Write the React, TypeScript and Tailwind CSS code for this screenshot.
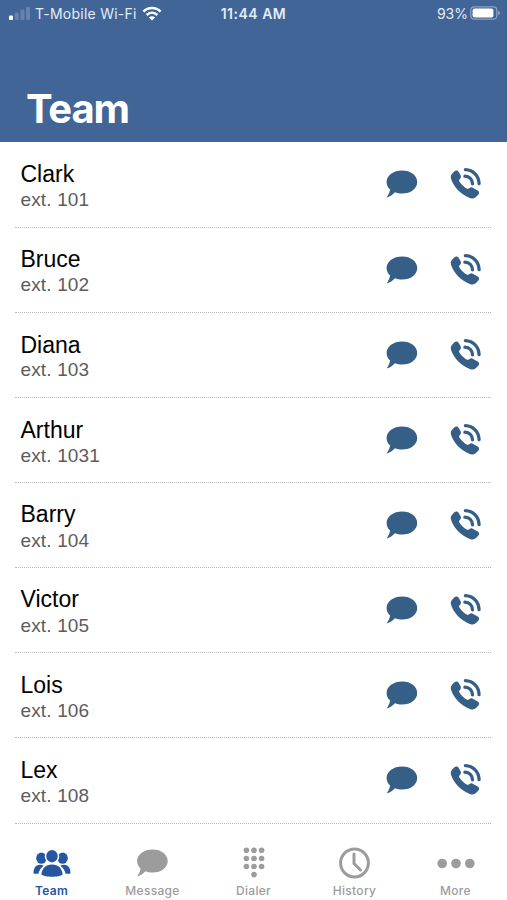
const TEAM = [
  { name: "Clark", ext: "101", nudge: "" },
  { name: "Bruce", ext: "102", nudge: "" },
  { name: "Diana", ext: "103", nudge: "translate-y-px" },
  { name: "Arthur", ext: "1031", nudge: "" },
  { name: "Barry", ext: "104", nudge: "-translate-y-px" },
  { name: "Victor", ext: "105", nudge: "-translate-y-px" },
  { name: "Lois", ext: "106", nudge: "" },
  { name: "Lex", ext: "108", nudge: "" },
];

const TABS = [
  { label: "Team", Icon: TeamIcon },
  { label: "Message", Icon: MessageIcon },
  { label: "Dialer", Icon: DialerIcon },
  { label: "History", Icon: HistoryIcon },
  { label: "More", Icon: MoreIcon },
];

function BubbleIcon({ className }: { className: string }) {
  return (
    <svg viewBox="0 0 32 28" fill="currentColor" className={className}>
      <path d="M16.2 0.5C24.8 0.5 31.2 5.4 31.2 12C31.2 18.6 24.8 23.6 16.2 23.6C13.5 23.6 11 23.1 8.9 22.2C7 24.3 4.5 26.2 0.8 27.4C2.5 24.8 3.7 22.3 4.1 19.6C1.7 17.5 0.6 14.9 0.6 12C0.6 5.4 7.4 0.5 16.2 0.5Z" />
    </svg>
  );
}

function CallIcon() {
  return (
    <svg viewBox="0 0 32 32" className="h-8 w-8 shrink-0">
      <path
        fill="currentColor"
        d="M1.9 6.9L4.4 4.3C5.8 2.9 7.6 3.2 8.6 4.7L10.5 8C11.3 9.5 11.1 10.9 9.9 12L8.8 13.2C10.2 16.4 14.1 20.3 17.7 22L19.6 20.9C20.8 20.1 22 20.2 23.2 20.9L27.7 23.5C29.3 24.5 29.6 26.1 28.4 27.5L26 30.1C24.4 31.8 22 31.7 19.8 30.9C11.2 27.7 4.1 20.2 1.3 12.4C0.5 10.2 0.5 8.4 1.9 6.9Z"
      />
      <path
        fill="none"
        stroke="currentColor"
        strokeWidth="3.3"
        strokeLinecap="round"
        d="M15.4 2.6C23.4 3 28.8 8.7 29.1 16.6M14.9 9.2C19.4 9.4 22.3 12.4 22.5 16.8"
      />
    </svg>
  );
}

function TeamIcon() {
  return (
    <svg viewBox="0 0 38 28" fill="currentColor" className="h-7 w-[38px]">
      <ellipse cx="8.4" cy="9.2" rx="5.2" ry="5.6" />
      <ellipse cx="29.6" cy="9.2" rx="5.2" ry="5.6" />
      <path d="M0.6 24.8C0.2 19.4 2.6 15.9 6.8 15.7C8.4 15.6 9.7 16 10.6 16.8C8 18.9 6 21.6 5.4 24.8Z" />
      <path d="M37.4 24.8C37.8 19.4 35.4 15.9 31.2 15.7C29.6 15.6 28.3 16 27.4 16.8C30 18.9 32 21.6 32.6 24.8Z" />
      <ellipse cx="19" cy="7.2" rx="7.2" ry="8" fill="white" />
      <ellipse cx="19" cy="7.2" rx="5.7" ry="6.2" />
      <path d="M8.4 25.4C8.8 19.4 12.8 15.4 19 15.4C25.2 15.4 29.2 19.4 29.6 25.4C26.5 28.4 11.5 28.4 8.4 25.4Z" />
    </svg>
  );
}

function MessageIcon() {
  return <BubbleIcon className="h-7 w-[33px]" />;
}

function DialerIcon() {
  return (
    <svg viewBox="0 0 24 32" fill="currentColor" className="h-8 w-6">
      {[3.2, 11.5, 19.5].map((y) =>
        [4.4, 12, 19.6].map((x) => <circle key={`${x}-${y}`} cx={x} cy={y} r="2.8" />),
      )}
      <circle cx="12" cy="27.6" r="2.8" />
    </svg>
  );
}

function HistoryIcon() {
  return (
    <svg viewBox="0 0 32 32" fill="none" stroke="currentColor" className="h-8 w-8">
      <circle cx="15.5" cy="16" r="13.9" strokeWidth="3" />
      <path d="M15 7V16.5L21.5 23" strokeWidth="3" strokeLinecap="round" strokeLinejoin="round" />
    </svg>
  );
}

function MoreIcon() {
  return (
    <svg viewBox="0 0 38 12" fill="currentColor" className="h-3 w-[38px]">
      <circle cx="5.2" cy="6.5" r="4.8" />
      <circle cx="19" cy="6.5" r="4.8" />
      <circle cx="32.8" cy="6.5" r="4.8" />
    </svg>
  );
}

function StatusBar() {
  return (
    <div className="grid h-7 grid-cols-[1fr_auto_1fr] items-center pl-2 pr-1.5 text-[14px] leading-7 text-[#e3ebf7]">
      <div className="flex items-center">
        <svg viewBox="0 0 24 14" fill="white" className="h-3.5 w-6">
          <rect x="1" y="8.5" width="4" height="4.5" rx="1" />
          <rect x="6.8" y="5.5" width="4" height="7.5" rx="1" opacity="0.2" />
          <rect x="12.4" y="2.5" width="4" height="10.5" rx="1" opacity="0.2" />
          <rect x="18" y="0" width="4" height="13" rx="1" opacity="0.2" />
        </svg>
        <span className="ml-[3px] whitespace-nowrap tracking-[0.25px]">T-Mobile Wi-Fi</span>
        <svg viewBox="0 0 20 15" fill="none" stroke="white" strokeWidth="2.6" className="ml-[5px] h-[15px] w-5 -translate-y-px">
          <path d="M1.4 5.6C6.2 0.8 13.8 0.8 18.6 5.6M4.7 9C7.8 6 12.2 6 15.3 9" />
          <path d="M10 14.6L6.9 11.5C8.7 9.7 11.3 9.7 13.1 11.5Z" fill="white" stroke="none" />
        </svg>
      </div>
      <span className="-translate-x-px font-semibold tracking-[0.5px]">11:44 AM</span>
      <div className="flex items-center justify-end">
        <span>93%</span>
        <svg viewBox="0 0 31 14" className="ml-[2px] h-3.5 w-[31px] -translate-y-px">
          <rect x="0.8" y="0.8" width="26" height="12.4" rx="3.5" fill="none" stroke="white" strokeOpacity="0.4" strokeWidth="1.2" />
          <rect x="2.6" y="2.6" width="20.8" height="8.8" rx="2" fill="white" />
          <path d="M28.3 4.8C30.3 5.5 30.3 8.5 28.3 9.2Z" fill="white" fillOpacity="0.5" />
        </svg>
      </div>
    </div>
  );
}

export default function App() {
  return (
    <div className="flex h-[900px] w-full flex-col overflow-hidden bg-white font-['Inter',sans-serif]">
      <header className="flex h-[142.4px] shrink-0 flex-col justify-between bg-[#416596]">
        <StatusBar />
        <h1 className="pb-2 pl-[26px] text-[40px] font-bold leading-[50px] tracking-[-1.2px] text-white">
          Team
        </h1>
      </header>

      <ul className="pl-[15px] pr-4">
        {TEAM.map(({ name, ext, nudge }) => (
          <li
            key={ext}
            className="flex h-[85.15px] items-start justify-between border-b border-dotted border-[#b4b4b4] pl-[5.5px] pr-[9px] font-['Liberation_Sans',Arial,sans-serif]"
          >
            <div className="pt-[17.8px]">
              <div className={`text-[23px] leading-7 text-black ${nudge}`}>{name}</div>
              <div className="text-[19px] leading-6 tracking-[0.15px] text-[#5c5c5c]">ext. {ext}</div>
            </div>
            <div className="flex gap-8 pt-[25px] text-[#365f88]">
              <BubbleIcon className="mt-[3px] h-7 w-8" />
              <CallIcon />
            </div>
          </li>
        ))}
      </ul>

      <nav className="flex grow px-px text-[#9c9c9c]">
        {TABS.map(({ label, Icon }) => (
          <button
            key={label}
            type="button"
            className="flex flex-1 flex-col items-center pt-[23.5px] text-[12px] font-medium leading-4 tracking-[0.3px] first:font-semibold first:text-[#2656a0]"
          >
            <span className="flex h-8 items-center">
              <Icon />
            </span>
            <span className="mt-1">{label}</span>
          </button>
        ))}
      </nav>
    </div>
  );
}
